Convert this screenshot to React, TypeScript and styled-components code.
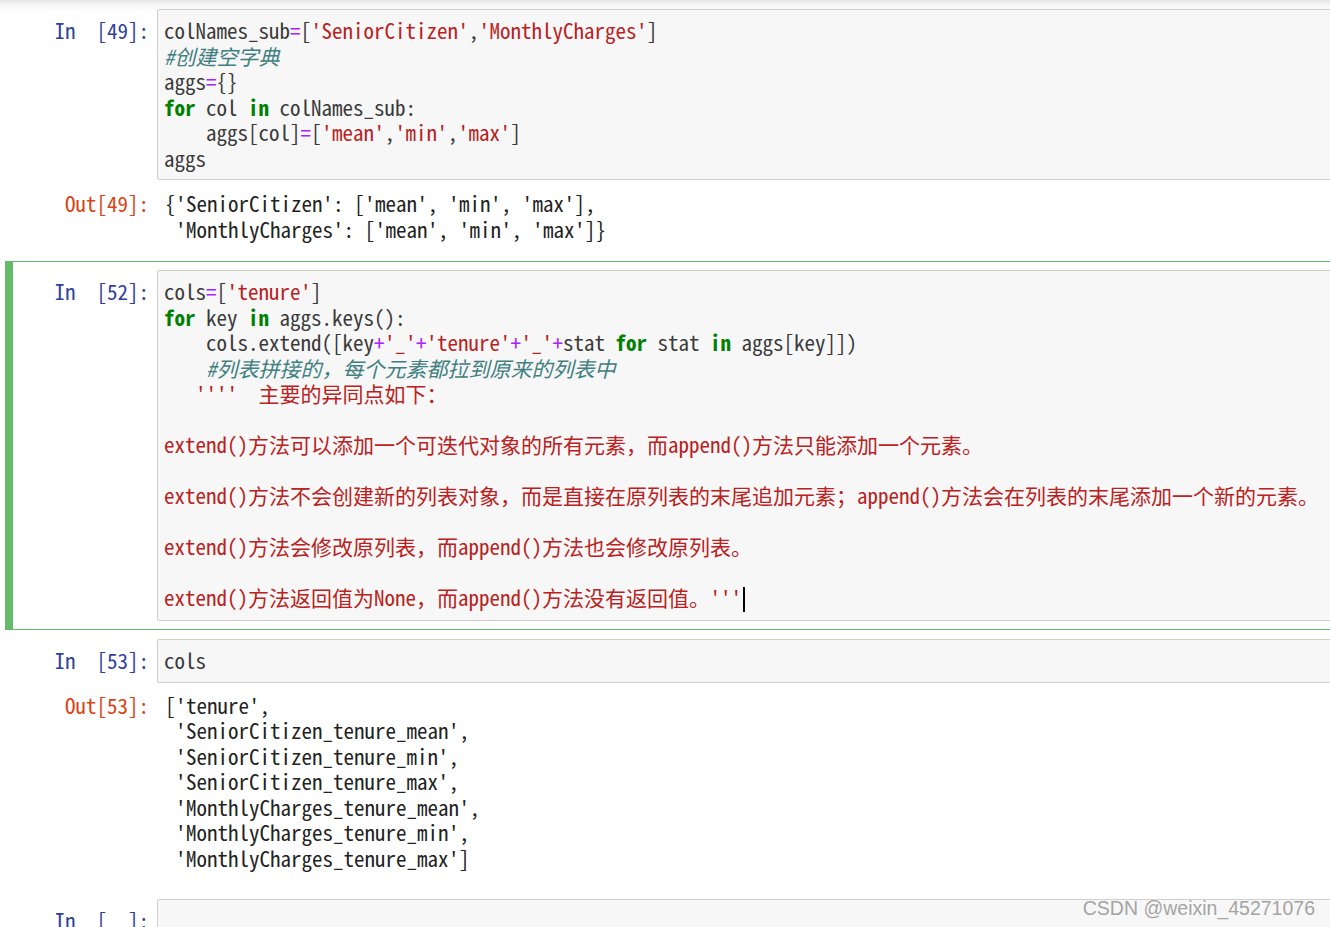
import React from 'react'
import styled, { createGlobalStyle, css } from 'styled-components'

const GlobalStyle = createGlobalStyle`
  html, body {
    margin: 0;
    padding: 0;
    overflow: hidden;
    background: #fff;
  }
  body {
    font-family: 'Noto Sans Mono CJK SC', 'Liberation Mono', 'Noto Sans CJK SC', monospace;
  }
`

const Page = styled.div`
  position: relative;
  width: 1330px;
  height: 927px;
  overflow: hidden;
  background: linear-gradient(to bottom, #e6e6e6 0px, #f6f6f6 5px, #fff 12px);
`

const Notebook = styled.div`
  width: 1380px;
  display: flex;
  flex-direction: column;
`

const Cell = styled.div<{ $selected?: boolean }>`
  margin-left: 5px;
  padding: 8px 0;
  border-top: 1px solid transparent;
  border-bottom: 1px solid transparent;
  border-left: 8px solid transparent;
  ${(p) =>
    p.$selected &&
    css`
      border-color: #66bb6a;
    `}
`

const Row = styled.div<{ $gap?: number }>`
  display: flex;
  align-items: flex-start;
  margin-top: ${(p) => p.$gap || 0}px;
`

const Prompt = styled.div<{ $out?: boolean; $pad?: number }>`
  flex: 0 0 144px;
  box-sizing: border-box;
  padding-right: 8px;
  padding-top: ${(p) => p.$pad || 0}px;
  text-align: right;
  white-space: pre;
  font-size: 21px;
  line-height: 25.5px;
  color: ${(p) => (p.$out ? '#d84315' : '#303f9f')};
`

const InputBox = styled.pre`
  flex: 1;
  margin: 0;
  padding: 8px 6px;
  min-height: 25.5px;
  background: #f7f7f7;
  border: 1px solid #cfcfcf;
  border-radius: 2px;
  font-family: inherit;
  font-size: 21px;
  line-height: 25.5px;
  color: #3a3a3a;
`

const Output = styled.pre`
  flex: 1;
  margin: 0;
  padding: 0 0 10px 8px;
  font-family: inherit;
  font-size: 21px;
  line-height: 25.5px;
  color: #222;
`

const Kw = styled.span`
  color: #008000;
  font-weight: bold;
`

const Str = styled.span`
  color: #ba2121;
`

const Op = styled.span`
  color: #aa22ff;
`

const Cm = styled.span`
  color: #408080;
  font-style: italic;
`

const Cursor = styled.span`
  display: inline-block;
  width: 2px;
  height: 25px;
  margin-left: 1px;
  vertical-align: -6px;
  background: #000;
`

const Watermark = styled.div`
  position: absolute;
  right: 15px;
  top: 897px;
  font-family: 'Liberation Sans', Arial, sans-serif;
  font-size: 19.5px;
  color: #a3a3a3;
  text-shadow: 0 0 1px #fff;
`

const App: React.FC = () => {
  return (
    <Page>
      <GlobalStyle />
      <Notebook>
        <Cell>
          <Row>
            <Prompt $pad={9}>{'In  [49]:'}</Prompt>
            <InputBox>
              colNames_sub<Op>=</Op>[<Str>'SeniorCitizen'</Str>,<Str>'MonthlyCharges'</Str>]
              {'\n'}
              <Cm>#创建空字典</Cm>
              {'\n'}aggs<Op>=</Op>{'{}'}
              {'\n'}
              <Kw>for</Kw> col <Kw>in</Kw> colNames_sub:
              {'\n    '}aggs[col]<Op>=</Op>[<Str>'mean'</Str>,<Str>'min'</Str>,<Str>'max'</Str>]
              {'\n'}aggs
            </InputBox>
          </Row>
          <Row $gap={11}>
            <Prompt $out>Out[49]:</Prompt>
            <Output>
              {"{'SeniorCitizen': ['mean', 'min', 'max'],\n 'MonthlyCharges': ['mean', 'min', 'max']}"}
            </Output>
          </Row>
        </Cell>

        <Cell $selected>
          <Row>
            <Prompt $pad={9}>{'In  [52]:'}</Prompt>
            <InputBox>
              cols<Op>=</Op>[<Str>'tenure'</Str>]
              {'\n'}
              <Kw>for</Kw> key <Kw>in</Kw> aggs.keys():
              {'\n    '}cols.extend([key<Op>+</Op>
              <Str>'_'</Str>
              <Op>+</Op>
              <Str>'tenure'</Str>
              <Op>+</Op>
              <Str>'_'</Str>
              <Op>+</Op>stat <Kw>for</Kw> stat <Kw>in</Kw> aggs[key]])
              {'\n    '}
              <Cm>#列表拼接的，每个元素都拉到原来的列表中</Cm>
              {'\n'}
              <Str>
                {"   ''''  主要的异同点如下：\n\n" +
                  'extend()方法可以添加一个可迭代对象的所有元素，而append()方法只能添加一个元素。\n\n' +
                  'extend()方法不会创建新的列表对象，而是直接在原列表的末尾追加元素；append()方法会在列表的末尾添加一个新的元素。\n\n' +
                  'extend()方法会修改原列表，而append()方法也会修改原列表。\n\n' +
                  "extend()方法返回值为None，而append()方法没有返回值。'''"}
              </Str>
              <Cursor />
            </InputBox>
          </Row>
        </Cell>

        <Cell>
          <Row>
            <Prompt $pad={9}>{'In  [53]:'}</Prompt>
            <InputBox>cols</InputBox>
          </Row>
          <Row $gap={10}>
            <Prompt $out>Out[53]:</Prompt>
            <Output>
              {[
                "['tenure',",
                " 'SeniorCitizen_tenure_mean',",
                " 'SeniorCitizen_tenure_min',",
                " 'SeniorCitizen_tenure_max',",
                " 'MonthlyCharges_tenure_mean',",
                " 'MonthlyCharges_tenure_min',",
                " 'MonthlyCharges_tenure_max']",
              ].join('\n')}
            </Output>
          </Row>
        </Cell>

        <Cell>
          <Row>
            <Prompt $pad={9}>{'In  [  ]:'}</Prompt>
            <InputBox>{' '}</InputBox>
          </Row>
        </Cell>
      </Notebook>
      <Watermark>CSDN @weixin_45271076</Watermark>
    </Page>
  )
}

export default App
